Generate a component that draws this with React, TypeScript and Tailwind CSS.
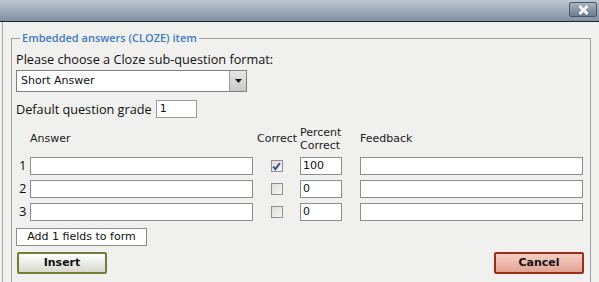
import React from 'react';

const rows = [
  { n: 1, checked: true, pct: '100' },
  { n: 2, checked: false, pct: '0' },
  { n: 3, checked: false, pct: '0' },
];

const Check: React.FC<{ on: boolean }> = ({ on }) => (
  <div className="w-[12px] h-[12px] border border-[#8e8f8f] bg-gradient-to-br from-[#dcdcdc] to-[#f6f6f6] flex items-center justify-center">
    {on && (
      <svg width="9" height="9" viewBox="0 0 9 9">
        <path d="M1.2 4.6 L3.4 7.2 L7.8 1.2" fill="none" stroke="#3d4f88" strokeWidth="2" />
      </svg>
    )}
  </div>
);

const App: React.FC = () => {
  return (
    <div className="w-[599px] h-[282px] overflow-hidden bg-[#f0f0ee] flex flex-col font-['Open_Sans',sans-serif]">
      {/* Title bar */}
      <div className="h-[22px] shrink-0 bg-gradient-to-b from-[#bcc7d2] to-[#7e90a3] border-b border-[#1e2226] flex items-start justify-end pr-[2px] pt-[2px]">
        <div className="w-[28px] h-[15px] rounded-[2px] border border-[#4b5866] bg-gradient-to-b from-[#a6b3c0] to-[#6b7d90] flex items-center justify-center">
          <svg width="11" height="10" viewBox="0 0 11 10">
            <path d="M1.5 1 L9.5 9 M9.5 1 L1.5 9" stroke="#ffffff" strokeWidth="2.6" />
          </svg>
        </div>
      </div>

      {/* Body */}
      <div className="flex-1 ml-[2px] border-l border-[#a7a7a7] pl-[8px] pt-[9px]">
        <fieldset className="w-[580px] h-[260px] border border-[#a0a0a0] pl-[4px]">
          <legend className="ml-[4px] px-[2px] text-[11px] leading-[14px] font-semibold text-[#3f7bbf]">
            Embedded answers (CLOZE) item
          </legend>

          <div className="text-[12.7px] leading-[18px] text-[#111] mt-[5px]">Please choose a Cloze sub-question format:</div>
          <div className="mt-[2px] w-[231px] h-[22px] border border-[#7f7f7f] bg-white flex items-center">
            <span className="flex-1 pl-[4px] text-[11px] font-['DejaVu_Sans',sans-serif] text-[#111]">Short Answer</span>
            <div className="w-[17px] h-[20px] border-l border-[#9a9a9a] bg-gradient-to-b from-[#e8e8e8] to-[#c8c8c8] flex items-center justify-center">
              <svg width="7" height="4" viewBox="0 0 7 4">
                <path d="M0 0 H7 L3.5 4 Z" fill="#111" />
              </svg>
            </div>
          </div>

          <div className="mt-[8px] flex items-center gap-[4px]">
            <span className="text-[12.7px] leading-[18px] text-[#111]">Default question grade</span>
            <div className="w-[41px] h-[18px] border border-[#9a9a9a] bg-white pl-[3px] text-[11px] leading-[16px] font-['DejaVu_Sans',sans-serif] text-[#111]">1</div>
          </div>

          {/* Header */}
          <div className="mt-[7px] flex items-center h-[27px] font-['DejaVu_Sans',sans-serif] text-[11px] leading-[13px] text-[#222]">
            <span className="w-[241px] pl-[14px]">Answer</span>
            <span className="w-[43px]">Correct</span>
            <span className="w-[60px]">Percent<br />Correct</span>
            <span>Feedback</span>
          </div>

          <div className="mt-[5px] flex flex-col gap-[5px]">
            {rows.map((r) => (
              <div key={r.n} className="flex items-center h-[18px]">
                <span className="w-[14px] pl-[3px] text-[13px] text-[#111]">{r.n}</span>
                <div className="w-[223px] h-[18px] border border-[#8c8c8c] bg-white" />
                <div className="w-[47px] flex justify-center">
                  <Check on={r.checked} />
                </div>
                <div className="w-[42px] h-[18px] border border-[#8c8c8c] bg-white pl-[2px] text-[11px] leading-[16px] font-['DejaVu_Sans',sans-serif] text-[#111]">
                  {r.pct}
                </div>
                <div className="ml-[18px] w-[223px] h-[18px] border border-[#8c8c8c] bg-white" />
              </div>
            ))}
          </div>

          <button className="mt-[7px] w-[131px] h-[18px] border border-[#8c8c8c] bg-white text-[11px] leading-[16px] font-['DejaVu_Sans',sans-serif] text-[#111]">
            Add 1 fields to form
          </button>

          <div className="mt-[6px] flex justify-between pr-[6px] pl-[1px]">
            <button className="w-[90px] h-[22px] rounded-[2px] border-2 border-[#6f7f35] bg-gradient-to-b from-[#ffffff] to-[#d9d9cf] text-[11px] font-bold font-['DejaVu_Sans',sans-serif] text-[#111]">
              Insert
            </button>
            <button className="w-[90px] h-[22px] rounded-[2px] border-2 border-[#9b2f15] bg-gradient-to-b from-[#f5cfc4] to-[#e1a394] text-[11px] font-bold font-['DejaVu_Sans',sans-serif] text-[#111]">
              Cancel
            </button>
          </div>
        </fieldset>
      </div>
    </div>
  );
};

export default App;
